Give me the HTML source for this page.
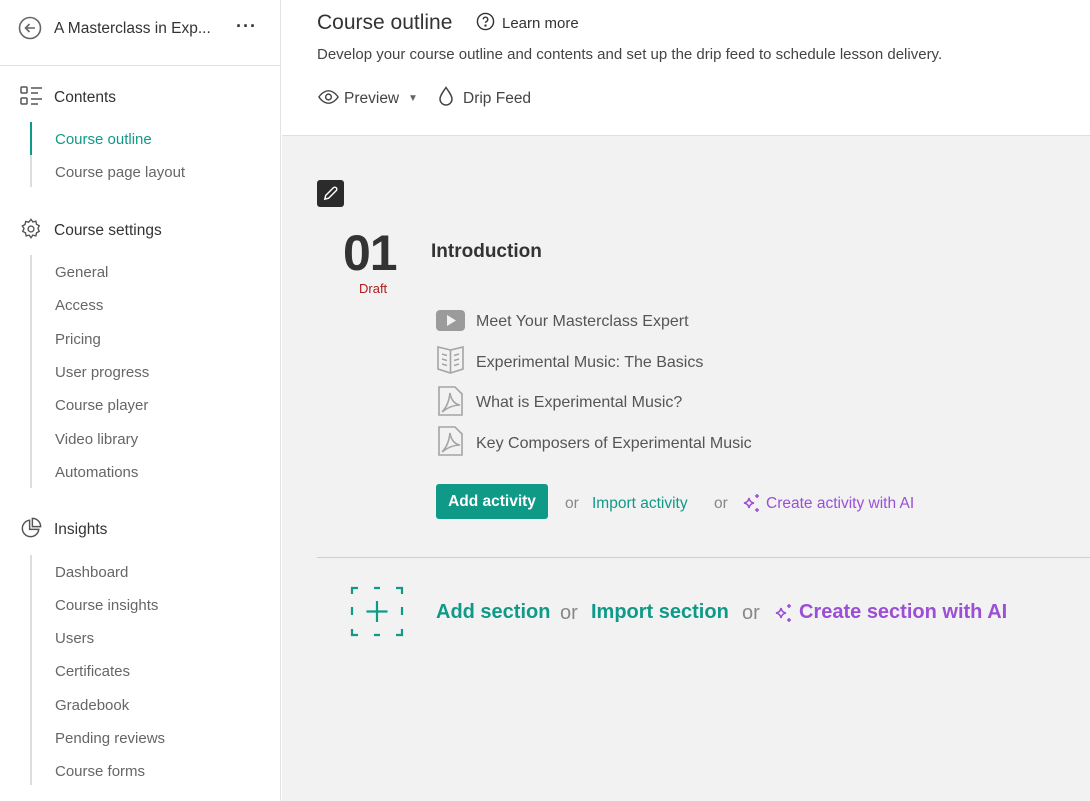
<!DOCTYPE html>
<html><head><meta charset="utf-8"><style>
*{margin:0;padding:0;box-sizing:border-box}
body{width:1090px;height:801px;overflow:hidden;font-family:"Liberation Sans",sans-serif;background:#fff;position:relative;color:#333}
.a{position:absolute;white-space:nowrap}
.t{margin-top:2px}
#side{position:absolute;left:0;top:0;width:281px;height:801px;border-right:1px solid #e3e3e3;background:#fff}
.it{position:absolute;left:55px;font-size:15px;color:#666;margin-top:2px}
.hd{position:absolute;left:54px;font-size:15.5px;color:#333;margin-top:2px}
.vl{position:absolute;left:30px;width:2px;background:#ddd}
#main{position:absolute;left:282px;top:135px;width:808px;height:666px;background:#f2f2f2;border-top:1px solid #e0e0e0}
.act{font-size:16px;color:#555;margin-top:2px}
.teal{color:#0f9a88}
.pur{color:#9a4fd6}
</style></head><body>
<div id="side">
<svg class="a" style="left:18px;top:16px" width="24" height="24" viewBox="0 0 24 24" fill="none" stroke="#666" stroke-width="1.6"><circle cx="12" cy="12" r="10.5"/><path d="M17 12H7.5M11.5 8l-4 4 4 4"/></svg>
<div class="a t" style="left:54px;top:18px;font-size:15.5px;color:#333">A Masterclass in Exp...</div>
<div class="a" style="left:236px;top:16px;font-size:18px;color:#333;letter-spacing:1px;font-weight:bold">···</div>
<div class="a" style="left:0;top:65px;width:281px;height:1px;background:#e3e3e3"></div>
<svg class="a" style="left:20px;top:86px" width="23" height="20" viewBox="0 0 23 20" fill="none" stroke="#555" stroke-width="1.5"><rect x="1" y="1" width="6" height="6" rx="1"/><rect x="1" y="12" width="6" height="6" rx="1"/><path d="M11 2h11M11 7h7M11 13h11M11 18h7"/></svg>
<div class="hd" style="top:87px">Contents</div>
<div class="vl" style="top:122px;height:65px"></div>
<div class="a" style="left:30px;top:122px;width:2px;height:33px;background:#0f9a88"></div>
<div class="it" style="top:129px;color:#0f9a88">Course outline</div>
<div class="it" style="top:162px">Course page layout</div>
<svg class="a" style="left:20px;top:218px" width="22" height="22" viewBox="0 0 24 24" fill="none" stroke="#555" stroke-width="1.5"><circle cx="12" cy="12" r="3.2"/><path d="M12 1.5l2 2.8 3.3-.8.7 3.3 3 1.6-1.4 3.1 1.4 3.1-3 1.6-.7 3.3-3.3-.8-2 2.8-2-2.8-3.3.8-.7-3.3-3-1.6 1.4-3.1L2.5 8.7l3-1.6.7-3.3 3.3.8z"/></svg>
<div class="hd" style="top:220px">Course settings</div>
<div class="vl" style="top:255px;height:233px"></div>
<div class="it" style="top:262px">General</div>
<div class="it" style="top:295px">Access</div>
<div class="it" style="top:329px">Pricing</div>
<div class="it" style="top:362px">User progress</div>
<div class="it" style="top:395px">Course player</div>
<div class="it" style="top:429px">Video library</div>
<div class="it" style="top:462px">Automations</div>
<svg class="a" style="left:20px;top:517px" width="22" height="22" viewBox="0 0 24 24" fill="none" stroke="#555" stroke-width="1.6"><path d="M10.5 3.5A9 9 0 1 0 20.5 13.5H10.5z"/><path d="M13.5 1.5a9 9 0 0 1 9 9h-9z"/></svg>
<div class="hd" style="top:519px">Insights</div>
<div class="vl" style="top:555px;height:230px"></div>
<div class="it" style="top:562px">Dashboard</div>
<div class="it" style="top:595px">Course insights</div>
<div class="it" style="top:628px">Users</div>
<div class="it" style="top:661px">Certificates</div>
<div class="it" style="top:695px">Gradebook</div>
<div class="it" style="top:728px">Pending reviews</div>
<div class="it" style="top:761px">Course forms</div>
</div>

<div class="a t" style="left:317px;top:9px;font-size:21px;color:#333">Course outline</div>
<svg class="a" style="left:476px;top:12px" width="19" height="19" viewBox="0 0 20 20" fill="none" stroke="#333" stroke-width="1.5"><circle cx="10" cy="10" r="8.5"/><path d="M7.6 7.8a2.4 2.4 0 1 1 3.2 2.3c-.6.3-.8.7-.8 1.4"/><circle cx="10" cy="14.3" r=".5" fill="#333"/></svg>
<div class="a t" style="left:502px;top:13px;font-size:15px;color:#333">Learn more</div>
<div class="a t" style="left:317px;top:44px;font-size:15px;color:#444">Develop your course outline and contents and set up the drip feed to schedule lesson delivery.</div>
<svg class="a" style="left:318px;top:89px" width="21" height="16" viewBox="0 0 22 16" fill="none" stroke="#444" stroke-width="1.5"><path d="M1 8s4-6.5 10-6.5S21 8 21 8s-4 6.5-10 6.5S1 8 1 8z"/><circle cx="11" cy="8" r="3"/></svg>
<div class="a t" style="left:344px;top:88px;font-size:15.5px;color:#444">Preview</div>
<div class="a t" style="left:408px;top:91px;font-size:10px;color:#666">▼</div>
<svg class="a" style="left:438px;top:86px" width="16" height="21" viewBox="0 0 16 21" fill="none" stroke="#444" stroke-width="1.5"><path d="M8 1.5C5 6 2 9.5 2 13a6 6 0 0 0 12 0c0-3.5-3-7-6-11.5z"/></svg>
<div class="a t" style="left:463px;top:88px;font-size:15.5px;color:#444">Drip Feed</div>

<div id="main"></div>
<div class="a" style="left:317px;top:180px;width:27px;height:27px;background:#2b2b2b;border-radius:3px"></div>
<svg class="a" style="left:321px;top:184px" width="19" height="19" viewBox="0 0 20 20" fill="none" stroke="#fff" stroke-width="1.5"><path d="M4 16l1-4 8-8a2 2 0 0 1 3 3l-8 8z"/></svg>
<div class="a t" style="left:343px;top:222px;font-size:50px;font-weight:bold;color:#333;letter-spacing:-1px">01</div>
<div class="a t" style="left:359px;top:279px;font-size:13px;color:#b01c1c">Draft</div>
<div class="a t" style="left:431px;top:239px;font-size:19px;font-weight:bold;color:#333">Introduction</div>

<svg class="a" style="left:436px;top:310px" width="29" height="21" viewBox="0 0 29 21"><rect x="0" y="0" width="29" height="21" rx="4" fill="#9b9b9b"/><path d="M11 5l9 5.5-9 5.5z" fill="#f2f2f2"/></svg>
<div class="a act" style="left:476px;top:311px">Meet Your Masterclass Expert</div>
<svg class="a" style="left:437px;top:346px" width="27" height="28" viewBox="0 0 27 28" fill="none" stroke="#a5a5a5" stroke-width="1.6"><path d="M13.5 4L1 1v22l12.5 4 12.5-4V1z M13.5 4v23"/><path d="M5 8l5 1.5M5 13l5 1.5M5 18l5 1.5M22 8l-5 1.5M22 13l-5 1.5M22 18l-5 1.5"/></svg>
<div class="a act" style="left:476px;top:352px">Experimental Music: The Basics</div>
<svg class="a" style="left:438px;top:386px" width="25" height="30" viewBox="0 0 25 30" fill="none" stroke="#a5a5a5" stroke-width="1.6"><path d="M1 1h16l7 7v21H1z"/><path d="M4 26c4-4 7-10 8-19 1 6 4 11 10 12-7 0-13 3-18 7z"/></svg>
<div class="a act" style="left:476px;top:392px">What is Experimental Music?</div>
<svg class="a" style="left:438px;top:426px" width="25" height="30" viewBox="0 0 25 30" fill="none" stroke="#a5a5a5" stroke-width="1.6"><path d="M1 1h16l7 7v21H1z"/><path d="M4 26c4-4 7-10 8-19 1 6 4 11 10 12-7 0-13 3-18 7z"/></svg>
<div class="a act" style="left:476px;top:433px">Key Composers of Experimental Music</div>

<div class="a" style="left:436px;top:484px;width:112px;height:35px;background:#0f9a88;border-radius:3px;color:#fff;font-size:15.5px;font-weight:bold;text-align:center;line-height:36px">Add activity</div>
<div class="a t" style="left:565px;top:493px;font-size:15.5px;color:#888">or</div>
<div class="a teal t" style="left:592px;top:493px;font-size:15.5px">Import activity</div>
<div class="a t" style="left:714px;top:493px;font-size:15.5px;color:#888">or</div>
<svg class="a" style="left:741px;top:493px" width="21" height="20" viewBox="0 0 21 20" fill="none" stroke="#9a4fd6" stroke-width="1.5"><path d="M8 5c.5 3 2 4.5 5 5-3 .5-4.5 2-5 5-.5-3-2-4.5-5-5 3-.5 4.5-2 5-5z"/><path d="M16 1v4M14 3h4M16 15v4M14 17h4"/></svg>
<div class="a pur t" style="left:766px;top:493px;font-size:15.5px">Create activity with AI</div>

<div class="a" style="left:317px;top:557px;width:773px;height:1px;background:#cfcfcf"></div>
<svg class="a" style="left:350px;top:585px" width="54" height="53" viewBox="0 0 54 53" fill="none" stroke="#0f9a88" stroke-width="2.2"><path d="M2 9V3h6M46 3h6v6M52 44v6h-6M8 50H2v-6M24 3h6M24 50h6M2 22v8M52 22v8M27 16v21M16.5 26.5h21"/></svg>
<div class="a teal t" style="left:436px;top:599px;font-size:20px;font-weight:bold">Add section</div>
<div class="a t" style="left:560px;top:600px;font-size:20px;color:#888">or</div>
<div class="a teal t" style="left:591px;top:599px;font-size:20px;font-weight:bold">Import section</div>
<div class="a t" style="left:742px;top:600px;font-size:20px;color:#888">or</div>
<svg class="a" style="left:773px;top:603px" width="21" height="20" viewBox="0 0 21 20" fill="none" stroke="#9a4fd6" stroke-width="1.6"><path d="M8 5c.5 3 2 4.5 5 5-3 .5-4.5 2-5 5-.5-3-2-4.5-5-5 3-.5 4.5-2 5-5z"/><path d="M16 1v4M14 3h4M16 15v4M14 17h4"/></svg>
<div class="a pur t" style="left:799px;top:599px;font-size:20px;font-weight:bold">Create section with AI</div>
</body></html>
